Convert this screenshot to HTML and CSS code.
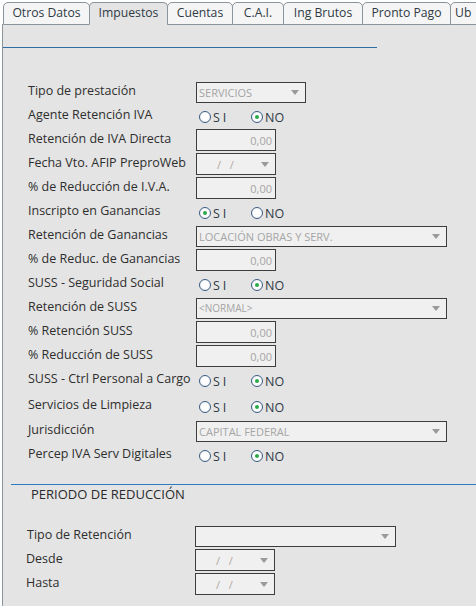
FILE: index.html
```html
<!DOCTYPE html>
<html lang="es">
<head>
<meta charset="utf-8">
<title>Impuestos</title>
<link rel="stylesheet" href="styles.css">
</head>
<body>
<div class="tabs">
  <div class="tab t1">Otros Datos</div>
  <div class="tab t2 active">Impuestos</div>
  <div class="tab t3">Cuentas</div>
  <div class="tab t4">C.A.I.</div>
  <div class="tab t5">Ing Brutos</div>
  <div class="tab t6">Pronto Pago</div>
  <div class="tab last">Ub</div>
</div>
<div class="panel">
  <div class="topline"></div>
  <div class="form">
    <div class="row"><span class="lbl">Tipo de prestación</span><div class="sel s110"><span class="val">SERVICIOS</span><i class="arrow"></i></div></div>
    <div class="row"><span class="lbl">Agente Retención IVA</span><div class="radios"><span class="opt si"><i class="rb"></i>SI</span><span class="opt"><i class="rb on"></i>NO</span></div></div>
    <div class="row"><span class="lbl">Retención de IVA Directa</span><div class="inp">0,00</div></div>
    <div class="row"><span class="lbl">Fecha Vto. AFIP PreproWeb</span><div class="sel date"><span class="dt">/&nbsp;&nbsp;/</span><i class="arrow"></i></div></div>
    <div class="row"><span class="lbl">% de Reducción de I.V.A.</span><div class="inp">0,00</div></div>
    <div class="row"><span class="lbl">Inscripto en Ganancias</span><div class="radios"><span class="opt si"><i class="rb on"></i>SI</span><span class="opt"><i class="rb"></i>NO</span></div></div>
    <div class="row"><span class="lbl">Retención de Ganancias</span><div class="sel wide"><span class="val">LOCACIÓN OBRAS Y SERV.</span><i class="arrow"></i></div></div>
    <div class="row"><span class="lbl">% de Reduc. de Ganancias</span><div class="inp">0,00</div></div>
    <div class="row"><span class="lbl">SUSS - Seguridad Social</span><div class="radios"><span class="opt si"><i class="rb"></i>SI</span><span class="opt"><i class="rb on"></i>NO</span></div></div>
    <div class="row"><span class="lbl">Retención de SUSS</span><div class="sel wide"><span class="val small">&lt;NORMAL&gt;</span><i class="arrow"></i></div></div>
    <div class="row"><span class="lbl">% Retención SUSS</span><div class="inp">0,00</div></div>
    <div class="row"><span class="lbl">% Reducción de SUSS</span><div class="inp">0,00</div></div>
    <div class="row"><span class="lbl">SUSS - Ctrl Personal a Cargo</span><div class="radios"><span class="opt si"><i class="rb"></i>SI</span><span class="opt"><i class="rb on"></i>NO</span></div></div>
    <div class="row tall"><span class="lbl">Servicios de Limpieza</span><div class="radios"><span class="opt si"><i class="rb"></i>SI</span><span class="opt"><i class="rb on"></i>NO</span></div></div>
    <div class="row"><span class="lbl">Jurisdicción</span><div class="sel wide"><span class="val">CAPITAL FEDERAL</span><i class="arrow"></i></div></div>
    <div class="row"><span class="lbl">Percep IVA Serv Digitales</span><div class="radios"><span class="opt si"><i class="rb"></i>SI</span><span class="opt"><i class="rb on"></i>NO</span></div></div>
  </div>
  <div class="section">
    <div class="sectline"></div>
    <div class="secttitle">PERIODO DE REDUCCIÓN</div>
    <div class="form form2">
      <div class="row"><span class="lbl">Tipo de Retención</span><div class="sel mid"><span class="val"></span><i class="arrow"></i></div></div>
      <div class="row"><span class="lbl l2">Desde</span><div class="sel date"><span class="dt">/&nbsp;&nbsp;/</span><i class="arrow"></i></div></div>
      <div class="row"><span class="lbl l2">Hasta</span><div class="sel date"><span class="dt">/&nbsp;&nbsp;/</span><i class="arrow"></i></div></div>
    </div>
  </div>
</div>
</body>
</html>
```
FILE: styles.css
```css
* { box-sizing: border-box; }
html, body { margin: 0; padding: 0; }
body {
  background: #ffffff;
  font-family: "Open Sans", "Noto Sans", sans-serif;
  font-size: 12.5px;
  color: #2e2e2e;
  width: 476px;
  height: 606px;
  overflow: hidden;
  padding-left: 2px;
}
.tabs {
  display: flex;
  height: 25px;
  padding-top: 2px;
  padding-left: 1px;
  position: relative;
  z-index: 1;
  white-space: nowrap;
  overflow: hidden;
}
.tab {
  height: 23px;
  padding: 0;
  line-height: 20px;
  text-align: center;
  background: #f5f5f5;
  border: 1px solid #8a949c;
  border-radius: 5px 5px 0 0;
  margin-right: -1px;
  color: #2f3b45;
  font-size: 12.2px;
  flex: none;
}
.t1 { width: 87px; }
.t2 { width: 79px; }
.t3 { width: 66px; }
.t4 { width: 52px; }
.t5 { width: 80px; }
.t6 { width: 89px; }
.tab.active {
  background: #e4e4e4;
  border-bottom-color: #e4e4e4;
}
.tab.last { padding: 0 20px 0 4px; text-align: left; }
.panel {
  background: #e4e4e4;
  border-left: 1px solid #8a949c;
  height: 582px;
  margin-top: -1px;
}
.topline {
  width: 374px;
  height: 24px;
  border-bottom: 1px solid #2f6da3;
}
.form {
  padding: 32px 0 0 25px;
}
.row {
  display: grid;
  grid-template-columns: 168px auto;
  align-items: center;
  height: 24px;
}
.row.tall { height: 26px; margin-top: 1px; }
.lbl {
  white-space: nowrap;
  line-height: 16px;
  margin-top: -3px;
}
.sel, .inp {
  height: 22px;
  background: #f0f0f0;
  border: 1px solid #3d3d3d;
  color: #a5a5a5;
  font-size: 11px;
  display: flex;
  align-items: center;
}
.inp {
  width: 80px;
  justify-content: flex-end;
  padding-right: 3px;
}
.sel { justify-content: space-between; padding: 0 6px 0 2px; }
.s110 { width: 110px; height: 21px; }
.wide { width: 251px; height: 21px; }
.mid { width: 201px; height: 21px; }
.date { width: 80px; }
.val { white-space: nowrap; }
.val.small { font-size: 10px; }
.dt { padding-left: 18px; color: #b0a8a0; letter-spacing: 1px; }
.arrow {
  width: 0; height: 0;
  border-left: 4px solid transparent;
  border-right: 4px solid transparent;
  border-top: 5px solid #9a9a9a;
}
.radios { display: flex; padding-left: 3px; }
.opt {
  width: 52px;
  display: flex;
  align-items: center;
  font-size: 12.5px;
  color: #2e3a46;
  margin-top: 2px;
}
.opt.si { letter-spacing: 3px; }
.rb {
  width: 12px; height: 12px;
  border: 1px solid #3a5b80;
  border-radius: 50%;
  background: radial-gradient(circle, #ffffff 40%, #e8eef4 100%);
  margin-right: 2px;
  position: relative;
  flex: none;
}
.rb.on::after {
  content: "";
  position: absolute;
  left: 3px; top: 3px;
  width: 4px; height: 4px;
  border-radius: 50%;
  background: #2aa84a;
}
.section { padding-top: 17px; }
.sectline {
  margin-left: 8px;
  border-top: 1px solid #2f79bf;
}
.secttitle {
  padding: 0 0 0 28px;
  line-height: 18px;
  font-size: 13px;
  color: #2a2a2a;
}
.form2 { padding: 21px 0 0 24px; }
.form2 .l2 { margin-left: -1px; }
```
